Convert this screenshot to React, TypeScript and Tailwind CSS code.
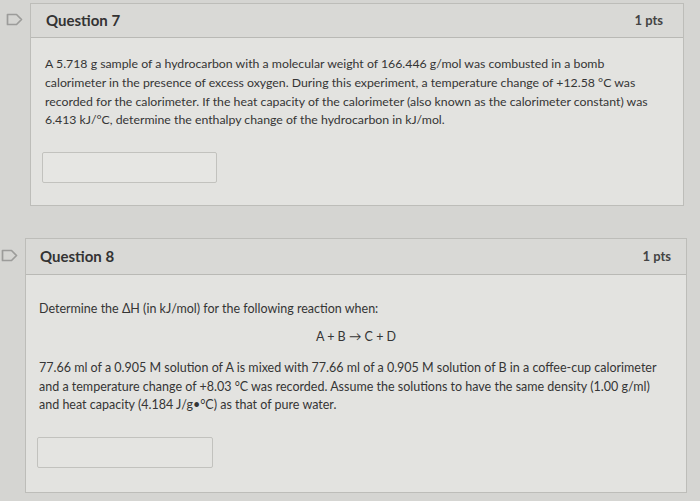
import React from 'react'

const Flag: React.FC = () => (
  <svg width="17" height="13" viewBox="0 0 17 13">
    <path d="M1.5 1.5 H10.5 L15.5 6.5 L10.5 11.5 H1.5 Z" fill="none" stroke="#9c9c9a" strokeWidth="1.7" strokeLinejoin="round" />
  </svg>
)

const Question: React.FC<{
  title: string
  children: React.ReactNode
  outer: string
  flag: string
  header: string
  body: string
}> = ({ title, children, outer, flag, header, body }) => (
  <div className={`flex items-start ${outer}`}>
    <div className={`shrink-0 ${flag}`}>
      <Flag />
    </div>
    <div className="flex-1 border border-[#bdbdb9] bg-[#e3e3e0]">
      <div className={`flex items-center justify-between border-b border-[#b9b9b5] bg-[#d9d9d6] ${header}`}>
        <span className="text-[15px] font-bold text-[#333]">{title}</span>
        <span className="text-[13px] font-bold text-[#444]">1 pts</span>
      </div>
      <div className={body}>{children}</div>
    </div>
  </div>
)

export default function App() {
  return (
    <div
      className="flex h-[501px] w-[700px] flex-col overflow-hidden bg-[#d5d5d2] pt-[3px] text-[#333]"
      style={{ fontFamily: 'Lato, "Open Sans", "Liberation Sans", sans-serif' }}
    >
      <Question
        title="Question 7"
        outer="pl-[6px] pr-[16px]"
        flag="w-[24px] pt-[10px]"
        header="h-[34px] pl-[15px] pr-[20px]"
        body="px-[14px] pb-[22px] pt-[17px]"
      >
        <p className="whitespace-nowrap text-[12.3px] leading-[18.8px] text-[#353535]">
          A 5.718 g sample of a hydrocarbon with a molecular weight of 166.446 g/mol was combusted in a bomb
          <br />
          calorimeter in the presence of excess oxygen. During this experiment, a temperature change of +12.58 °C was
          <br />
          recorded for the calorimeter. If the heat capacity of the calorimeter (also known as the calorimeter constant) was
          <br />
          6.413 kJ/°C, determine the enthalpy change of the hydrocarbon in kJ/mol.
        </p>
        <div className="mt-[22px] ml-[-3px] h-[31px] w-[175px] rounded-[2px] border border-[#c2c2be] bg-[#e6e6e3]" />
      </Question>

      <Question
        title="Question 8"
        outer="mt-[32px] pl-[1px] pr-[13px]"
        flag="w-[24px] pt-[11px]"
        header="h-[36px] pl-[14px] pr-[15px]"
        body="px-[13px] pb-[24px] pt-[25px]"
      >
        <p className="text-[12.5px] leading-[18.8px] text-[#353535]">Determine the ΔH (in kJ/mol) for the following reaction when:</p>
        <p className="mt-[9px] text-center text-[12.5px] leading-[18.8px] text-[#353535]">A + B → C + D</p>
        <p className="mt-[12px] whitespace-nowrap text-[12.5px] leading-[18.8px] text-[#353535]">
          77.66 ml of a 0.905 M solution of A is mixed with 77.66 ml of a 0.905 M solution of B in a coffee-cup calorimeter
          <br />
          and a temperature change of +8.03 °C was recorded. Assume the solutions to have the same density (1.00 g/ml)
          <br />
          and heat capacity (4.184 J/g•°C) as that of pure water.
        </p>
        <div className="mt-[22px] ml-[-2px] h-[31px] w-[176px] rounded-[2px] border border-[#c2c2be] bg-[#e4e4e1]" />
      </Question>
    </div>
  )
}
